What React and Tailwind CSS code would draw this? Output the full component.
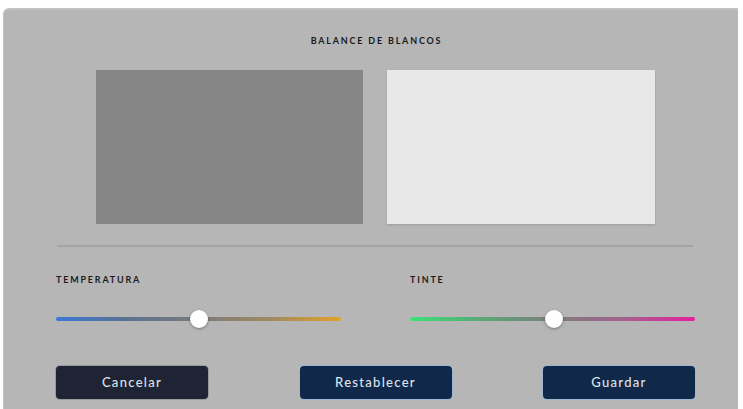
import React from 'react';

const font = { fontFamily: 'Lato, "Open Sans", "DejaVu Sans", sans-serif' };

const Slider = ({ label, track, value }) => (
  <div className="w-[285px]">
    <div className="text-[9px] font-bold tracking-[0.2em] text-[#1c1c1c] leading-[11px]">{label}</div>
    <div className="relative mt-[32px] h-[4px] rounded-full" style={{ background: track }}>
      <div
        className="absolute top-1/2 w-[18px] h-[18px] -translate-x-1/2 -translate-y-1/2 rounded-full bg-white shadow-[0_1px_3px_rgba(0,0,0,0.35)]"
        style={{ left: `${value}%` }}
      />
    </div>
  </div>
);

const Button = ({ children, navy }) => (
  <button
    className={`w-[152px] h-[33px] rounded-[4px] text-[13px] font-medium tracking-[0.1em] text-[#dfe3e8] ${
      navy
        ? 'bg-[#10294a] shadow-[0_0_0_1px_#9db6cf]'
        : 'bg-[#1e2433] shadow-[0_0_0_1px_#9a9a9a]'
    }`}
  >
    {children}
  </button>
);

export default function App() {
  return (
    <div className="w-[743px] h-[409px] bg-white pt-[8px] pl-[3px] pr-[5px] overflow-hidden" style={font}>
      <div className="h-[410px] bg-[#b6b6b6] rounded-tl-[6px] border-t-2 border-l border-[#c2c2c2] flex flex-col pl-[52px] pr-[43px]">
        <div className="mt-[25px] text-center pl-[2px] text-[9px] font-bold tracking-[0.2em] text-[#1a1a1a] leading-[11px]">
          BALANCE DE BLANCOS
        </div>

        <div className="mt-[24px] flex gap-[24px] px-[40px]">
          <div className="w-[267px] h-[154px] bg-[#868686]" />
          <div className="w-[268px] h-[154px] bg-[#e8e8e8] shadow-[0_1px_2px_rgba(0,0,0,0.15)]" />
        </div>

        <div className="mt-[21px] ml-[1px] w-[636px] h-[2px] bg-[#a5a5a5]" />

        <div className="mt-[27px] flex justify-between">
          <Slider label="TEMPERATURA" track="linear-gradient(90deg,#3a78d6 0%,#5a7290 25%,#7b7b7b 50%,#a08a60 75%,#e2a12a 100%)" value={50} />
          <Slider label="TINTE" track="linear-gradient(90deg,#3ee07a 0%,#5aa874 25%,#7d7d7d 50%,#a4628e 75%,#e41e9c 100%)" value={50.5} />
        </div>

        <div className="mt-[45px] flex justify-between">
          <Button>Cancelar</Button>
          <Button navy>Restablecer</Button>
          <Button navy>Guardar</Button>
        </div>
      </div>
    </div>
  );
}
